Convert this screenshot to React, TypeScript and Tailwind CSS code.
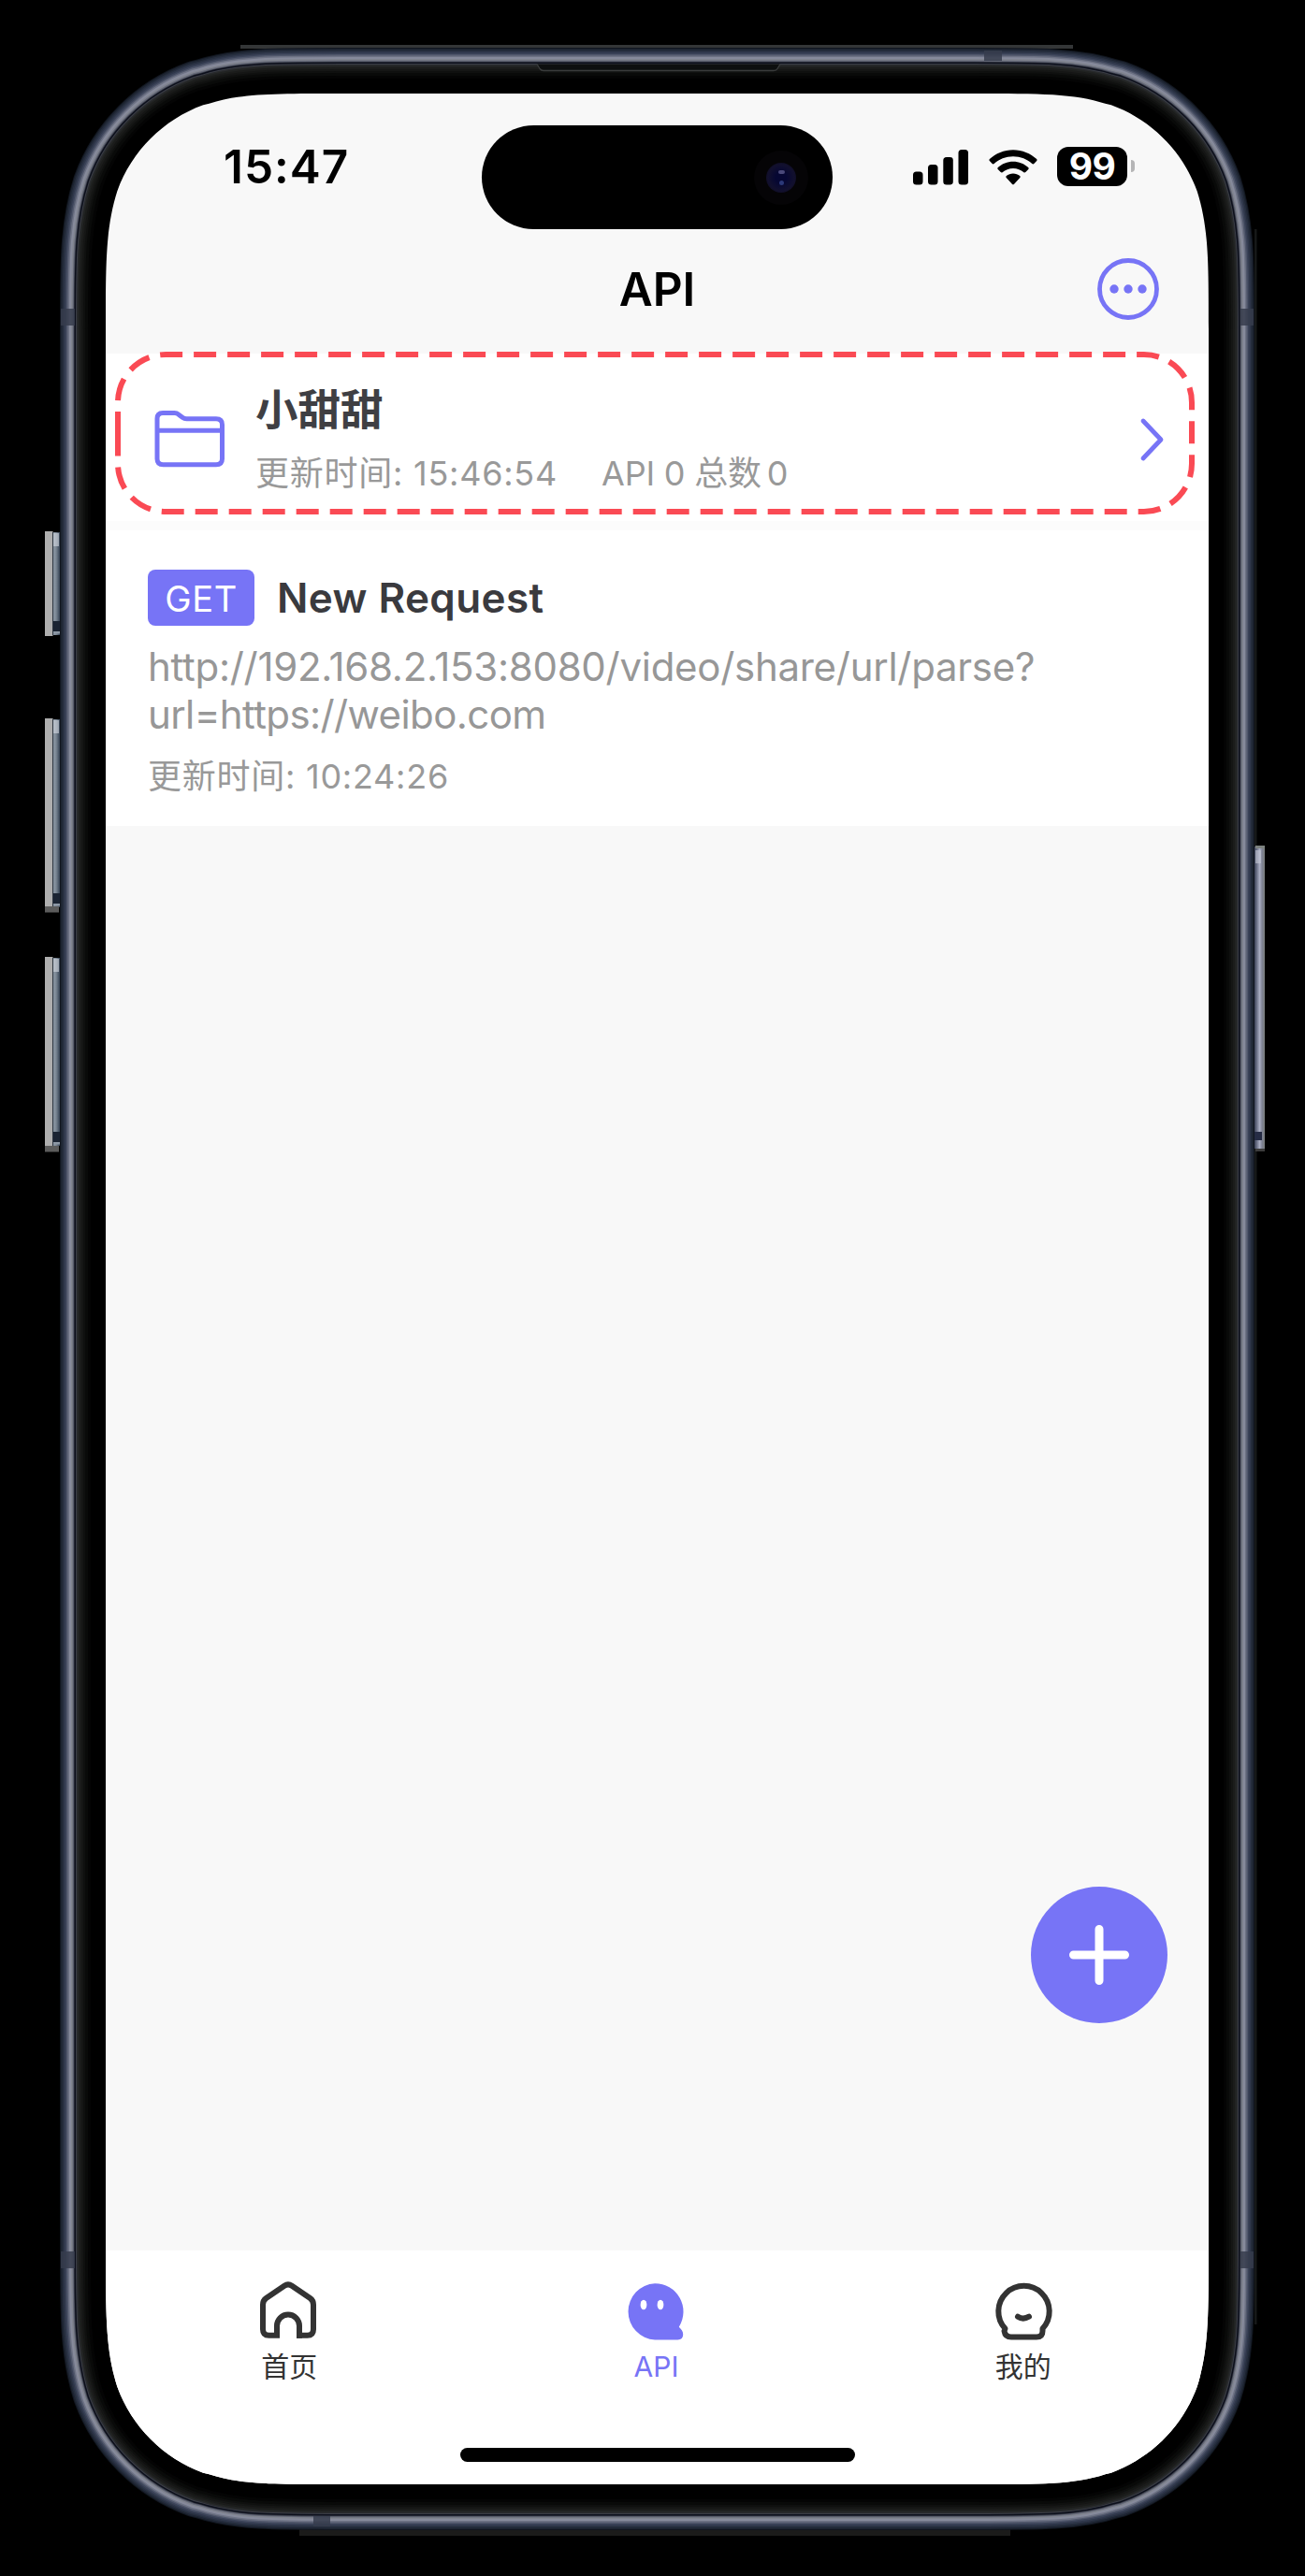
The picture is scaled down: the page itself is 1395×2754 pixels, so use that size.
import type { ReactNode } from "react";

const ACCENT = "#7774f6";
const SCREEN_W = 1179;
const SCREEN_H = 2556;

/** Control points of one continuous-curvature corner, in multiples of the radius. */
const CORNER: [number, number][] = [
  [1.528665, 0], [1.088493, 0], [0.868407, 0], [0.669934, 0.065496],
  [0.631494, 0.074911], [0.372824, 0.169059], [0.16906, 0.372824], [0.074911, 0.631494],
  [0, 0.868407], [0, 1.088493], [0, 1.528665],
];

/** Continuous-curvature rounded rectangle. */
function squircle(w: number, h: number, r: number): string {
  const corner = (right: boolean, bottom: boolean, reverse: boolean) => {
    const p = CORNER.map(([a, b]) => {
      const x = right ? w - a * r : a * r;
      const y = bottom ? h - b * r : b * r;
      return `${x.toFixed(2)} ${y.toFixed(2)}`;
    });
    if (reverse) {
      p.reverse();
      return `${p[0]}C${p[1]} ${p[2]} ${p[3]}C${p[4]} ${p[5]} ${p[6]}L${p[7]}C${p[8]} ${p[9]} ${p[10]}`;
    }
    return `${p[0]}C${p[1]} ${p[2]} ${p[3]}L${p[4]}C${p[5]} ${p[6]} ${p[7]}C${p[8]} ${p[9]} ${p[10]}`;
  };
  return `M${corner(true, false, false)}L${corner(true, true, true)}L${corner(false, true, false)}L${corner(false, false, true)}Z`;
}

const SCREEN_PATH = squircle(SCREEN_W, SCREEN_H, 165);

/** Metal rim shading: distance from the screen edge and its colour, outermost first. */
const RIM: [number, string][] = [
  [49, "#11161f"], [48, "#1d2431"], [46.5, "#262e3e"], [45, "#2f374a"], [43.5, "#3b4358"],
  [42, "#50576b"], [40.5, "#6d7284"], [39, "#868a9b"], [37, "#80848f"], [35.5, "#646877"],
  [34.3, "#3d414d"], [33.5, "#0c0f1b"], [32, "#3a3d46"], [31, "#282a2c"], [29.5, "#212322"],
  [28, "#1b1c1b"], [26, "#151615"], [24, "#0f100f"], [22, "#090a09"], [19, "#040404"], [16, "#000000"],
];

function SideButton({ y, h }: { y: number; h: number }) {
  return (
    <g>
      <rect x={48} y={y} width={8.5} height={h} fill="#aeaeae" />
      <rect x={56} y={y + 1} width={8.5} height={h - 2} fill="url(#btnL)" />
      <rect x={56} y={y + 1} width={1} height={h - 2} fill="#2c3540" />
      <rect x={57} y={y + 2} width={6} height={14} fill="#d5dbe2" opacity={0.6} />
      <rect x={57} y={y + h - 16} width={7.5} height={11} fill="#1b2433" />
      <rect x={57} y={y + h - 5} width={7} height={2.5} fill="#8d98a5" />
    </g>
  );
}

function Bezel() {
  return (
    <svg className="pointer-events-none absolute inset-0" width={1395} height={2754} aria-hidden>
      <defs>
        <linearGradient id="btnL">
          <stop offset="0" stopColor="#8b97a3" />
          <stop offset=".45" stopColor="#7d8996" />
          <stop offset="1" stopColor="#2b394b" />
        </linearGradient>
        <linearGradient id="btnR">
          <stop offset="0" stopColor="#3a4157" />
          <stop offset=".5" stopColor="#a9adc2" />
          <stop offset=".75" stopColor="#7d8192" />
          <stop offset="1" stopColor="#7b7f7d" />
        </linearGradient>
      </defs>
      <rect x={257} y={48} width={890} height={4} fill="#343637" />
      <rect x={320} y={2703} width={760} height={8} fill="#1b1b1a" />
      <rect x={1341} y={245} width={2.5} height={2240} fill="#161818" />
      <SideButton y={568} h={112} />
      <SideButton y={768} h={203} />
      <SideButton y={1023} h={203} />
      <rect x={48} y={969} width={15} height={6.500} fill="#5c5c5c" />
      <rect x={48} y={1225} width={15} height={6.500} fill="#5c5c5c" />
      <rect x={1341} y={905} width={11} height={323} fill="url(#btnR)" />
      <rect x={1342} y={904} width={10} height={3} fill="#7d827f" />
      <rect x={1342} y={909} width={6} height={14} fill="#c5c8d6" opacity={0.6} />
      <rect x={1341} y={1210} width={8} height={9} fill="#262c45" />
      <rect x={1342} y={1228} width={10} height={3} fill="#3c3c3c" />
      <g transform="translate(113 100)" fill="none">
        {RIM.map(([d, color]) => (
          <path key={d} d={SCREEN_PATH} stroke={color} strokeWidth={d * 2} />
        ))}
      </g>
      <path d="M574 68.5l3 5q1.500 2 4 2h246q3 0 4-2l3-5" fill="#0d0f0f" stroke="#3a3c3c" strokeWidth={1.3} />
      <g fill="#363c4c" opacity={0.85}>
        <rect x={65} y={330} width={15} height={18} />
        <rect x={1326} y={330} width={14} height={18} />
        <rect x={65} y={2407} width={15} height={18} />
        <rect x={1326} y={2407} width={14} height={18} />
        <rect x={1052} y={54} width={19} height={11} />
        <rect x={335} y={2690} width={18} height={11} />
      </g>
    </svg>
  );
}

function StatusBar() {
  return (
    <div className="flex h-[157px] items-center pr-[79px] pl-[126px]">
      <span className="pt-[1px] text-[49.5px] leading-none font-semibold tracking-[1px] text-black">15:47</span>
      <svg className="ml-auto" width={60} height={40} viewBox="0 0 60 40">
        <rect x={0} y={24.5} width={10.5} height={14} rx={3.5} />
        <rect x={16} y={17} width={10.5} height={21.5} rx={3.5} />
        <rect x={32.3} y={9} width={10.5} height={29.5} rx={3.5} />
        <rect x={48.5} y={1} width={10.5} height={37.5} rx={3.5} />
      </svg>
      <svg className="ml-[21px]" width={52} height={40} viewBox="0 0 52 40">
        <path d="M26 1.200C16.300 1.200 7.400 5 .9 11.100c-.6.6-.6 1.400-.1 1.900l2.900 3c.5.600 1.400.6 2 0C11 11.100 18.100 8.200 26 8.200s15 2.900 20.300 7.800c.6.500 1.500.5 2 0l2.900-3c.5-.500.5-1.300-.1-1.900C44.600 5 35.700 1.200 26 1.200Z" />
        <path d="M26 13.800c-6.200 0-11.900 2.400-16.200 6.300-.6.500-.6 1.400-.1 2l3 3c.5.500 1.300.5 1.900.1 3-2.700 7-4.300 11.400-4.300s8.400 1.600 11.400 4.300c.6.500 1.400.4 1.900-.1l3-3c.5-.6.5-1.400-.1-2-4.300-3.900-10-6.300-16.200-6.300Z" />
        <path d="M26 26.500c-2.700 0-5.200.9-7.200 2.500-.6.500-.6 1.300-.1 1.900l6.200 6.900c.6.700 1.600.7 2.200 0l6.200-6.900c.5-.6.5-1.400-.1-1.900-2-1.600-4.500-2.500-7.200-2.500Z" />
      </svg>
      <span className="mr-[1px] mb-[2px] ml-[21px] flex h-[42px] w-[75px] items-center justify-center rounded-[12px] bg-black text-[39px] leading-none font-bold tracking-[-0.5px] text-white">
        99
      </span>
      <span className="mb-[2px] ml-[3px] h-[13px] w-[4px] rounded-r-full bg-[#b5b5b6]" />
    </div>
  );
}

function DynamicIsland() {
  return (
    <div className="absolute top-[34px] left-[402px] flex h-[111px] w-[375px] items-center justify-end rounded-full bg-black pr-[26px]">
      <span className="flex size-[58px] items-center justify-center rounded-full bg-[#050406]">
        <span className="flex size-[32px] flex-col items-center justify-center gap-[7px] rounded-full bg-[radial-gradient(circle,#060733_25%,#12102e_62%,#07060f_100%)]">
          <span className="h-[4px] w-[7px] rounded-full bg-[#4a497a]" />
          <span className="size-[5px] rounded-full bg-[#2b3878]" />
        </span>
      </span>
    </div>
  );
}

function TitleBar() {
  return (
    <div className="relative flex h-[104px] items-center justify-center">
      <h1 className="pt-[2px] text-[49.5px] leading-none font-semibold text-black">API</h1>
      <svg className="absolute top-[19px] right-[53px]" width={66} height={66} viewBox="0 0 66 66" fill={ACCENT}>
        <circle cx={33} cy={33} r={30.5} fill="none" stroke={ACCENT} strokeWidth={4.8} />
        <circle cx={18} cy={33} r={4.7} />
        <circle cx={33} cy={33} r={4.7} />
        <circle cx={48} cy={33} r={4.7} />
      </svg>
    </div>
  );
}

function FolderRow() {
  return (
    <div className="relative flex h-[179px] bg-white pr-[47px] pl-[52px]">
      <svg className="mt-[60px] shrink-0" width={76} height={63} viewBox="0 0 76 63" fill="none" stroke={ACCENT} strokeWidth={5}>
        <path d="M3 52.500V9.500Q3 3.500 9 3.500H21.500Q24 3.500 26 5.200L30 8.300Q32 9.800 34.500 9.800H66Q72.500 9.800 72.500 16V52.500Q72.500 58.800 66 58.800H9.500Q3 58.800 3 52.500Z" />
        <path d="M3 22.200H72.500" />
      </svg>
      <div className="ml-[32px] flex-1 pt-[31px]">
        <div className="text-[45.5px] leading-[60px] font-semibold text-[#3f3f43]">小甜甜</div>
        <div className="flex text-[36px] leading-[74px] whitespace-pre text-[#999999]">
          <span className="w-[370px] tracking-[0.75px]">更新时间: 15:46:54</span>
          <span className="tracking-[-0.2px]">API 0 总数</span>
          <span className="ml-[6px]">0</span>
        </div>
      </div>
      <svg className="mt-[68px]" width={28} height={48} viewBox="0 0 28 48" fill="none" stroke={ACCENT} strokeWidth={4.8} strokeLinecap="round" strokeLinejoin="round">
        <path d="M5 4L24 24L5 44" />
      </svg>
      <svg className="pointer-events-none absolute -top-[5px] left-[8px]" width={1160} height={182} aria-hidden>
        <path
          d="M5 91V57.200A51.200 51.200 0 0 1 56.200 6H1101.800A51.200 51.200 0 0 1 1153 57.200V122.800A51.200 51.200 0 0 1 1101.800 174H56.200A51.200 51.200 0 0 1 5 122.800V91"
          fill="none"
          stroke="#fa4a54"
          strokeWidth={6}
          strokeDasharray="24 12"
        />
      </svg>
    </div>
  );
}

function RequestCard() {
  return (
    <div className="h-[316px] bg-white pt-[42px] pl-[45px]">
      <div className="flex items-center">
        <span className="flex h-[60px] w-[114px] items-center justify-center rounded-[8px] bg-[#7774f6] pt-[1px] text-[38px] leading-none tracking-[0.6px] text-white">
          GET
        </span>
        <span className="ml-[24px] text-[44px] leading-[60px] font-semibold tracking-[0.4px] text-[#3a3a3e]">New Request</span>
      </div>
      <div className="mt-[19px] text-[42px] leading-[50.5px] text-[#979797]">
        <div className="tracking-[-0.28px]">http://192.168.2.153:8080/video/share/url/parse?</div>
        <div className="tracking-[-0.6px]">url=https://weibo.com</div>
      </div>
      <div className="mt-[16px] text-[36px] leading-[50px] tracking-[0.75px] text-[#999999]">更新时间: 10:24:26</div>
    </div>
  );
}

function Tab({ label, className, children }: { label: string; className: string; children: ReactNode }) {
  return (
    <div className={`flex flex-1 flex-col items-center pt-[32px] ${className}`}>
      <svg width={64} height={66} viewBox="0 0 64 66" fill="none">
        {children}
      </svg>
      <span className="text-[30px] leading-[53px]">{label}</span>
    </div>
  );
}

function TabBar() {
  return (
    <div className="relative flex h-[250px] bg-white pr-[2px]">
      <Tab label="首页" className="text-[#333333]">
        <path
          d="M20.500 58.800H10.500Q4 58.800 4 52.300V26Q4 21.500 7.500 19L27 5.800Q31 3 35 5.800L54.500 19Q58 21.500 58 26V52.300Q58 58.800 51.500 58.800H43V48.500A12 12 0 0 0 19 48.500V61.800"
          stroke="currentColor"
          strokeWidth={6}
        />
        <path d="M43 50V61.800" stroke="currentColor" strokeWidth={6} />
      </Tab>
      <Tab label="API" className="text-[#7774f6]">
        <path
          d="M31 3.200a30.300 30.300 0 0 1 25.800 46.500C59.500 52.500 61.200 54.500 61.200 57.800Q61.200 63.500 55.500 63.500H31A30.200 30.200 0 0 1 31 3.200Z"
          fill="currentColor"
        />
        <ellipse cx={19} cy={26} rx={3.4} ry={5.2} fill="#fff" />
        <ellipse cx={37} cy={26} rx={3.4} ry={5.2} fill="#fff" />
      </Tab>
      <Tab label="我的" className="text-[#333333]">
        <path
          d="M12.500 51.500A27.200 27.200 0 1 1 52.500 51.500V54Q52.500 60.600 46 60.600H19Q12.500 60.600 11.500 54Z"
          stroke="currentColor"
          strokeWidth={6}
          strokeLinejoin="round"
        />
        <path d="M26 38.700Q31.500 42.500 38 38.700" stroke="currentColor" strokeWidth={6} strokeLinecap="round" />
      </Tab>
      <span className="absolute bottom-[24px] left-[379px] h-[15px] w-[422px] rounded-full bg-black" />
    </div>
  );
}

export default function App() {
  return (
    <div className="relative h-[2754px] w-[1395px] overflow-hidden bg-black px-[113px] pt-[100px] font-['Inter','Noto_Sans_CJK_SC',sans-serif]">
      <Bezel />
      <main
        className="relative flex h-[2556px] w-[1179px] flex-col bg-[#f8f8f8]"
        style={{ clipPath: `path("${SCREEN_PATH}")` }}
      >
        <StatusBar />
        <TitleBar />
        <div className="h-[17px]" />
        <FolderRow />
        <div className="h-[10px] bg-[#fcfcfc]" />
        <RequestCard />
        <div className="flex-1" />
        <TabBar />
        <DynamicIsland />
        <button className="absolute top-[1917px] right-[44px] flex size-[146px] items-center justify-center rounded-full bg-[#7774f6]" aria-label="Add">
          <svg width={66} height={66} viewBox="0 0 66 66" stroke="#fff" strokeWidth={9} strokeLinecap="round">
            <path d="M5.500 33H60.500M33 5.500V60.500" />
          </svg>
        </button>
      </main>
    </div>
  );
}
